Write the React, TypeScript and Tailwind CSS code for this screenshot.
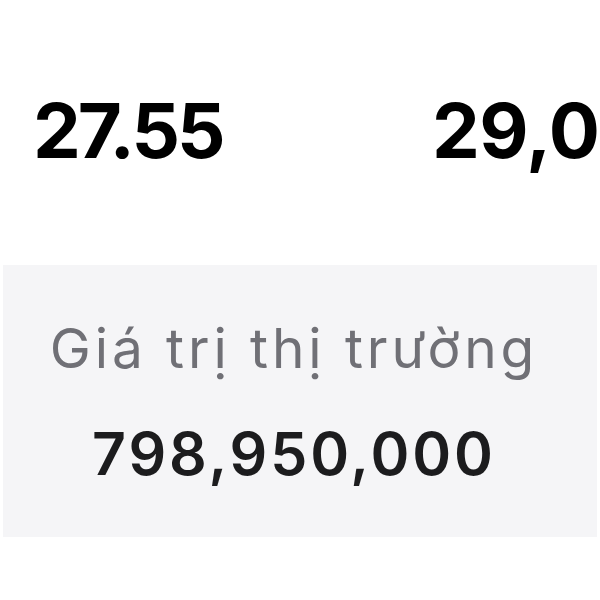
export default function App() {
  return (
    <div className="w-[600px] h-[600px] bg-white overflow-hidden font-['Inter',sans-serif]">
      {/* giá tham chiếu / trần */}
      <div className="h-[265px] pt-[92px] pl-[33px] flex whitespace-nowrap">
        <div className="w-[399px] shrink-0 text-[76px] leading-none font-bold tracking-[-3px] text-black">27.55</div>
        <div className="text-[76px] leading-none font-bold tracking-[-0.5px] text-black">29,000</div>
      </div>

      <div className="mx-[3px] h-[272px] bg-[#f5f5f7] pt-[56px] pr-[12px] flex flex-col items-center">
        <div className="text-[55px] leading-none tracking-[3.9px] text-[#707076] whitespace-nowrap">Giá trị thị trường</div>
        <div className="mt-[48px] text-[59px] leading-none font-semibold tracking-[2.9px] text-[#1c1c1e] whitespace-nowrap">
          798,950,000
        </div>
      </div>
    </div>
  );
}
